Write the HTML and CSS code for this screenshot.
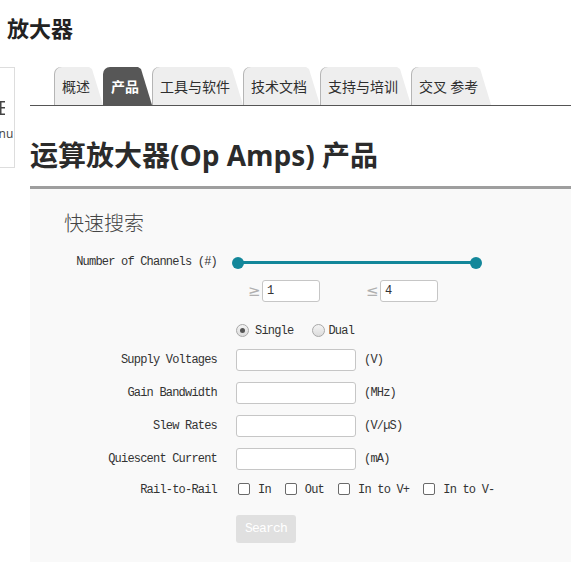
FILE: index.html
```html
<!DOCTYPE html>
<html lang="zh">
<head>
<meta charset="utf-8">
<title>放大器</title>
<link rel="stylesheet" href="styles.css">
</head>
<body>
<header class="site-title">放大器</header>
<div class="layout">
  <aside class="side-box">
    <svg class="side-icon" width="5" height="14" viewBox="0 0 5 14"><rect x="0" y="0" width="1.5" height="14" fill="#444"/><rect x="0" y="0" width="5" height="1.5" fill="#444"/><rect x="0" y="6" width="5" height="1.5" fill="#444"/><rect x="0" y="12.5" width="5" height="1.5" fill="#444"/></svg>
    <span class="side-text">Menu</span>
  </aside>
  <main class="content">
    <nav class="tabs">
      <a class="tab">概述</a>
      <a class="tab active">产品</a>
      <a class="tab">工具与软件</a>
      <a class="tab">技术文档</a>
      <a class="tab">支持与培训</a>
      <a class="tab">交叉 参考</a>
    </nav>
    <h2 class="page-heading">运算放大器(Op Amps) 产品</h2>
    <section class="panel">
      <h3 class="panel-title">快速搜索</h3>
      <div class="form">
        <div class="row r-slider">
          <label class="lbl">Number of Channels (#)</label>
          <div class="ctl">
            <div class="slider">
              <span class="track"></span>
              <span class="thumb thumb-l"></span>
              <span class="thumb thumb-r"></span>
            </div>
          </div>
        </div>
        <div class="row r-range">
          <span class="lbl"></span>
          <div class="ctl range">
            <span class="op">≥</span><span class="field small">1</span>
            <span class="op op2">≤</span><span class="field small">4</span>
          </div>
        </div>
        <div class="row r-radio">
          <span class="lbl"></span>
          <div class="ctl radios">
            <span class="radio checked"></span><span class="rtext rt1">Single</span>
            <span class="radio r2"></span><span class="rtext rt2">Dual</span>
          </div>
        </div>
        <div class="row r-input">
          <label class="lbl">Supply Voltages</label>
          <div class="ctl"><span class="field wide"></span><span class="unit">(V)</span></div>
        </div>
        <div class="row r-input">
          <label class="lbl">Gain Bandwidth</label>
          <div class="ctl"><span class="field wide"></span><span class="unit">(MHz)</span></div>
        </div>
        <div class="row r-input">
          <label class="lbl">Slew Rates</label>
          <div class="ctl"><span class="field wide"></span><span class="unit">(V/µS)</span></div>
        </div>
        <div class="row r-input">
          <label class="lbl">Quiescent Current</label>
          <div class="ctl"><span class="field wide"></span><span class="unit">(mA)</span></div>
        </div>
        <div class="row r-check">
          <label class="lbl">Rail-to-Rail</label>
          <div class="ctl checks">
            <span class="cb"></span><span class="ctext">In</span>
            <span class="cb"></span><span class="ctext">Out</span>
            <span class="cb"></span><span class="ctext">In to V+</span>
            <span class="cb"></span><span class="ctext">In to V-</span>
          </div>
        </div>
        <div class="row r-btn">
          <span class="lbl"></span>
          <div class="ctl"><span class="btn">Search</span></div>
        </div>
      </div>
    </section>
  </main>
</div>
</body>
</html>
```

FILE: styles.css
```css
html, body {
  margin: 0;
  padding: 0;
  background: #fff;
  overflow: hidden;
}
body {
  font-family: "Open Sans", "Noto Sans CJK SC", sans-serif;
  color: #333;
}
.site-title {
  margin-top: 13px;
  padding-left: 7px;
  font-size: 22px;
  line-height: 30px;
  font-weight: 700;
  color: #222;
}
.layout {
  display: flex;
  margin-top: 24px;
}
.side-box {
  flex: 0 0 auto;
  width: 14px;
  height: 99px;
  border: 1px solid #ddd;
  border-left: none;
  background: #fff;
  overflow: hidden;
  position: relative;
  margin-right: 15px;
}
.side-icon {
  display: block;
  margin-top: 33px;
  margin-left: 0;
}
.side-text {
  display: block;
  font-family: "Open Sans", sans-serif;
  font-size: 12px;
  line-height: 14px;
  margin-top: 12px;
  margin-left: -19px;
  white-space: nowrap;
  color: #444;
}
.content {
  flex: 1 1 auto;
  min-width: 0;
}
.tabs {
  display: flex;
  padding-left: 24px;
  height: 38px;
  border-bottom: 1px solid #555;
}
.tab {
  display: block;
  height: 38px;
  line-height: 38px;
  padding: 0 13px 0 8px;
  font-family: "Noto Sans CJK SC", sans-serif;
  font-size: 14px;
  color: #2e2e2e;
  background: #eee;
  box-shadow: inset 1px 0 0 #b5b5b5;
  border-top-left-radius: 7px;
  clip-path: polygon(0 0, calc(100% - 14px) 0, calc(100% - 11px) 2px, 100% 100%, 0 100%);
  white-space: nowrap;
}
.tab.active {
  background: #575757;
  box-shadow: none;
  color: #fff;
  font-weight: 700;
}
.page-heading {
  margin: 31px 0 0 0;
  padding-bottom: 13px;
  font-size: 28px;
  line-height: 36px;
  font-weight: 700;
  color: #2b2b2b;
  border-bottom: 3px solid #9e9e9e;
}
.panel {
  background: #f9f9f9;
  padding: 20px 0 19px 34px;
}
.panel-title {
  margin: 0;
  font-family: "Noto Sans CJK SC", sans-serif;
  font-size: 20px;
  line-height: 28px;
  font-weight: 300;
  color: #444;
}
.form {
  margin-top: 18px;
  display: flex;
  flex-direction: column;
  gap: 11px;
  font-family: "Liberation Mono", "DejaVu Sans Mono", monospace;
  font-size: 12px;
  letter-spacing: -0.8px;
  color: #333;
}
.row {
  display: grid;
  grid-template-columns: 153px 1fr;
  column-gap: 19px;
  align-items: center;
}
.lbl {
  text-align: right;
  white-space: nowrap;
  line-height: 14px;
}
.ctl {
  display: flex;
  align-items: center;
}
.r-slider { height: 14px; }
.slider {
  position: relative;
  margin-left: 2px;
  width: 238px;
  height: 14px;
}
.track {
  position: absolute;
  left: 0;
  right: 0;
  top: 6px;
  height: 3px;
  background: #13879a;
}
.thumb {
  position: absolute;
  top: 1.5px;
  width: 12px;
  height: 12px;
  border-radius: 50%;
  background: #13879a;
}
.thumb-l { left: -6px; }
.thumb-r { right: -6px; }
.r-range { height: 22px; }
.range { padding-left: 12px; }
.op {
  display: block;
  width: 14px;
  font-family: "DejaVu Sans", sans-serif;
  font-size: 15px;
  line-height: 22px;
  color: #b0b0b0;
  letter-spacing: 0;
  white-space: nowrap;
}
.op2 { margin-left: 46px; }
.field {
  display: block;
  box-sizing: border-box;
  height: 22px;
  line-height: 20px;
  border: 1px solid #c6c6c6;
  border-radius: 3px;
  background: #fff;
  padding-left: 4px;
  color: #333;
}
.field.small { width: 58px; }
.field.wide { width: 120px; }
.unit { margin-left: 8px; }
.r-radio { height: 15px; margin-top: 10px; }
.radio {
  display: block;
  box-sizing: border-box;
  width: 13px;
  height: 13px;
  border-radius: 50%;
  border: 1px solid #a8a8a8;
  background: linear-gradient(#f4f4f4, #dcdcdc);
  position: relative;
}
.radio.checked::after {
  content: "";
  position: absolute;
  left: 3px;
  top: 3px;
  width: 5px;
  height: 5px;
  border-radius: 50%;
  background: #555;
}
.rtext { line-height: 14px; }
.rt1 { margin-left: 6px; }
.r2 { margin-left: 19px; }
.rt2 { margin-left: 3px; }
.r-input { height: 22px; }
.r-check { height: 18px; }
.checks { padding-left: 2px; }
.cb {
  display: block;
  box-sizing: border-box;
  width: 12px;
  height: 12px;
  border: 1px solid #6a6a6a;
  border-radius: 2px;
  background: #fff;
  margin-top: -3px;
}
.ctext { margin-left: 8px; margin-right: 14px; line-height: 14px; }
.r-btn { height: 28px; margin-top: 5px; }
.btn {
  display: block;
  height: 28px;
  line-height: 28px;
  width: 60px;
  text-align: center;
  background: #e0e0e0;
  border-radius: 3px;
  color: #fff;
  font-size: 13px;
}
```
